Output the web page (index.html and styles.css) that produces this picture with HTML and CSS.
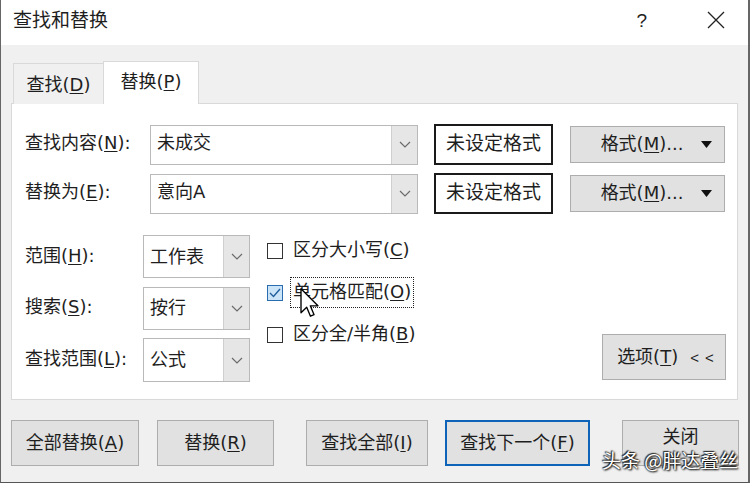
FILE: index.html
```html
<!DOCTYPE html>
<html lang="zh-CN">
<head>
<meta charset="utf-8">
<title>查找和替换</title>
<link rel="stylesheet" href="styles.css">
</head>
<body>
<div class="window">
  <div class="titlebar">
    <span class="title">查找和替换</span>
    <span class="help">?</span>
    <span class="close-x">
      <svg width="18" height="18" viewBox="0 0 18 18"><path d="M1 1 L17 17 M17 1 L1 17" stroke="#222" stroke-width="1.3" fill="none"/></svg>
    </span>
  </div>

  <div class="tabs">
    <div class="tab">查找(<u>D</u>)</div>
    <div class="tab active">替换(<u>P</u>)</div>
  </div>

  <div class="panel">
    <div class="row">
      <span class="label wide">查找内容(<u>N</u>):</span>
      <div class="combo big">
        <span class="combo-text">未成交</span>
        <span class="combo-btn"><svg width="12" height="7" viewBox="0 0 12 7"><polyline points="1,1 6,6 11,1" fill="none" stroke="#6a6a6a" stroke-width="1.2"/></svg></span>
      </div>
      <div class="fmtbox">未设定格式</div>
      <div class="btn fmtbtn"><span>格式(<u>M</u>)...</span><svg class="tri" width="11" height="7" viewBox="0 0 11 7"><polygon points="0,0 11,0 5.5,7" fill="#111"/></svg></div>
    </div>
    <div class="row row2">
      <span class="label wide">替换为(<u>E</u>):</span>
      <div class="combo big">
        <span class="combo-text">意向A</span>
        <span class="combo-btn"><svg width="12" height="7" viewBox="0 0 12 7"><polyline points="1,1 6,6 11,1" fill="none" stroke="#6a6a6a" stroke-width="1.2"/></svg></span>
      </div>
      <div class="fmtbox">未设定格式</div>
      <div class="btn fmtbtn"><span>格式(<u>M</u>)...</span><svg class="tri" width="11" height="7" viewBox="0 0 11 7"><polygon points="0,0 11,0 5.5,7" fill="#111"/></svg></div>
    </div>

    <div class="lower">
      <div class="opts">
        <span class="label">范围(<u>H</u>):</span>
        <div class="combo small">
          <span class="combo-text">工作表</span>
          <span class="combo-btn"><svg width="12" height="7" viewBox="0 0 12 7"><polyline points="1,1 6,6 11,1" fill="none" stroke="#6a6a6a" stroke-width="1.2"/></svg></span>
        </div>
        <span class="label">搜索(<u>S</u>):</span>
        <div class="combo small">
          <span class="combo-text">按行</span>
          <span class="combo-btn"><svg width="12" height="7" viewBox="0 0 12 7"><polyline points="1,1 6,6 11,1" fill="none" stroke="#6a6a6a" stroke-width="1.2"/></svg></span>
        </div>
        <span class="label">查找范围(<u>L</u>):</span>
        <div class="combo small tall">
          <span class="combo-text">公式</span>
          <span class="combo-btn"><svg width="12" height="7" viewBox="0 0 12 7"><polyline points="1,1 6,6 11,1" fill="none" stroke="#6a6a6a" stroke-width="1.2"/></svg></span>
        </div>
      </div>

      <div class="checks">
        <div class="check">
          <span class="box"></span>
          <span class="ctext">区分大小写(<u>C</u>)</span>
        </div>
        <div class="check">
          <span class="box checked"><svg width="14" height="14" viewBox="0 0 14 14"><polyline points="2,7 5.5,10.5 12,3" fill="none" stroke="#1f5f9e" stroke-width="1.4"/></svg></span>
          <span class="ctext focus">单元格匹配(<u>O</u>)</span>
          <svg class="cursor" width="20" height="30" viewBox="0 0 13 20"><path d="M0.5 0.5 L0.5 16.5 L4.3 12.8 L6.8 18.8 L9.2 17.8 L6.7 11.9 L11.8 11.9 Z" fill="#fff" stroke="#000" stroke-width="0.9" stroke-linejoin="round"/></svg>
        </div>
        <div class="check">
          <span class="box"></span>
          <span class="ctext">区分全/半角(<u>B</u>)</span>
        </div>
      </div>

      <div class="btn optbtn">选项(<u>T</u>)<span class="lt">&lt; &lt;</span></div>
    </div>
  </div>

  <div class="actions">
    <div class="btn act a1">全部替换(<u>A</u>)</div>
    <div class="btn act a2">替换(<u>R</u>)</div>
    <div class="btn act a3">查找全部(<u>I</u>)</div>
    <div class="btn act a4 default">查找下一个(<u>F</u>)</div>
    <div class="btn act a5">关闭</div>
  </div>

  <div class="watermark">头条 @胖达叠丝</div>
</div>
</body>
</html>
```

FILE: styles.css
```css
* { box-sizing: border-box; }

html, body {
  margin: 0;
  padding: 0;
  background: #ffffff;
}

body {
  font-family: "DejaVu Sans", "Noto Sans CJK SC", sans-serif;
  font-size: 18px;
  color: #1e1e1e;
  line-height: 1;
}

u { text-decoration: underline; text-underline-offset: 2px; text-decoration-thickness: 1px; }

.window {
  position: relative;
  width: 750px;
  height: 483px;
  background: #f0f0f0;
  border-left: 1px solid #666;
  border-right: 2px solid #666;
  border-bottom: 1px solid #555;
}

.titlebar {
  height: 45px;
  background: #fff;
  display: flex;
  align-items: center;
  padding-left: 12px;
  padding-bottom: 5px;
}

.title { font-size: 19px; }

.help {
  margin-left: auto;
  font-family: "Liberation Sans", sans-serif;
  font-size: 19px;
  margin-right: 60px;
}

.close-x {
  display: flex;
  margin-right: 23px;
}

.tabs {
  display: flex;
  align-items: flex-end;
  margin-top: 16px;
  padding-left: 12px;
  height: 43px;
  margin-bottom: -1px;
  position: relative;
  z-index: 1;
}

.tab {
  width: 91px;
  height: 41px;
  border: 1px solid #d9d9d9;
  border-bottom: none;
  background: #f0f0f0;
  display: flex;
  align-items: center;
  justify-content: center;
  padding-top: 2px;
}

.tab.active {
  width: 96px;
  height: 43px;
  background: #fff;
  margin-left: -1px;
  padding-top: 0;
  padding-bottom: 3px;
}

.panel {
  margin-left: 10px;
  width: 727px;
  height: 297px;
  background: #fff;
  border: 1px solid #d9d9d9;
  padding: 20px 11px 0 13px;
}

.row {
  display: flex;
  align-items: center;
  height: 41px;
}

.row2 { margin-top: 8px; }

.row .label { padding-bottom: 4px; }
.row .combo-text { padding-bottom: 4px; }
.row .fmtbox { padding-bottom: 3px; }

.label { white-space: nowrap; }
.label.wide { width: 125px; }

.combo {
  display: flex;
  height: 40px;
  border: 1px solid #b9b9b9;
  background: #fff;
}

.combo.big { width: 268px; }

.combo-text {
  flex: 1;
  display: flex;
  align-items: center;
  padding-left: 6px;
}

.combo-btn {
  width: 26px;
  background: #e6e6e6;
  border-left: 1px solid #cfcfcf;
  display: flex;
  align-items: center;
  justify-content: center;
}

.fmtbox {
  margin-left: 16px;
  width: 119px;
  height: 41px;
  border: 2px solid #1a1a1a;
  display: flex;
  align-items: center;
  justify-content: center;
  font-size: 19px;
}

.btn {
  background: #e1e1e1;
  border: 1px solid #adadad;
  display: flex;
  align-items: center;
  justify-content: center;
}

.fmtbtn {
  margin-left: 17px;
  width: 155px;
  height: 37px;
  padding-left: 18px;
  padding-bottom: 2px;
}

.fmtbtn .tri { margin-left: 18px; margin-top: 2px; }

.lower {
  display: flex;
  margin-top: 21px;
  height: 147px;
}

.opts {
  display: grid;
  grid-template-columns: 118px 107px;
  grid-template-rows: 43px 43px 44px;
  row-gap: 8.5px;
  align-items: center;
}

.opts .label { padding-bottom: 2px; }

.combo.small { width: 107px; height: 43px; }
.combo.small.tall { height: 44px; }

.checks {
  margin-left: 17px;
  display: flex;
  flex-direction: column;
  gap: 11px;
}

.check {
  position: relative;
  display: flex;
  align-items: center;
  height: 31px;
}

.box {
  width: 16px;
  height: 16px;
  border: 1px solid #333;
  background: #fff;
  margin-right: 7px;
  display: flex;
  align-items: center;
  justify-content: center;
}

.box.checked {
  background: #cce4f7;
  border-color: #2a6cb0;
}

.ctext {
  height: 31px;
  display: flex;
  align-items: center;
  padding: 0 2px 1px 2px;
  border: 1px dotted transparent;
}

.ctext.focus { border-color: #222; }

.cursor {
  position: absolute;
  left: 33px;
  top: 11px;
}

.optbtn {
  margin-left: auto;
  align-self: flex-end;
  margin-bottom: 2px;
  width: 124px;
  height: 46px;
  padding-left: 4px;
}

.optbtn .lt {
  font-family: "Liberation Sans", sans-serif;
  font-size: 15px;
  margin-left: 12px;
  letter-spacing: 1px;
}

.actions {
  display: flex;
  margin-top: 20px;
  padding-left: 10px;
}

.act { height: 46px; }
.a1 { width: 128px; }
.a2 { width: 117px; margin-left: 18px; }
.a3 { width: 122px; margin-left: 32px; }
.a4 { width: 145px; margin-left: 17px; }
.a5 { width: 117px; margin-left: 32px; padding-bottom: 12px; }

.default {
  border: 2px solid #0c63b8;
}

.watermark {
  position: absolute;
  left: 601px;
  top: 450px;
  font-family: "Noto Sans CJK SC", sans-serif;
  font-size: 19px;
  color: #fff;
  white-space: nowrap;
  text-shadow: 0 0 2px #000, 1px 1px 2px #000, -1px -1px 1px #333;
}
```
